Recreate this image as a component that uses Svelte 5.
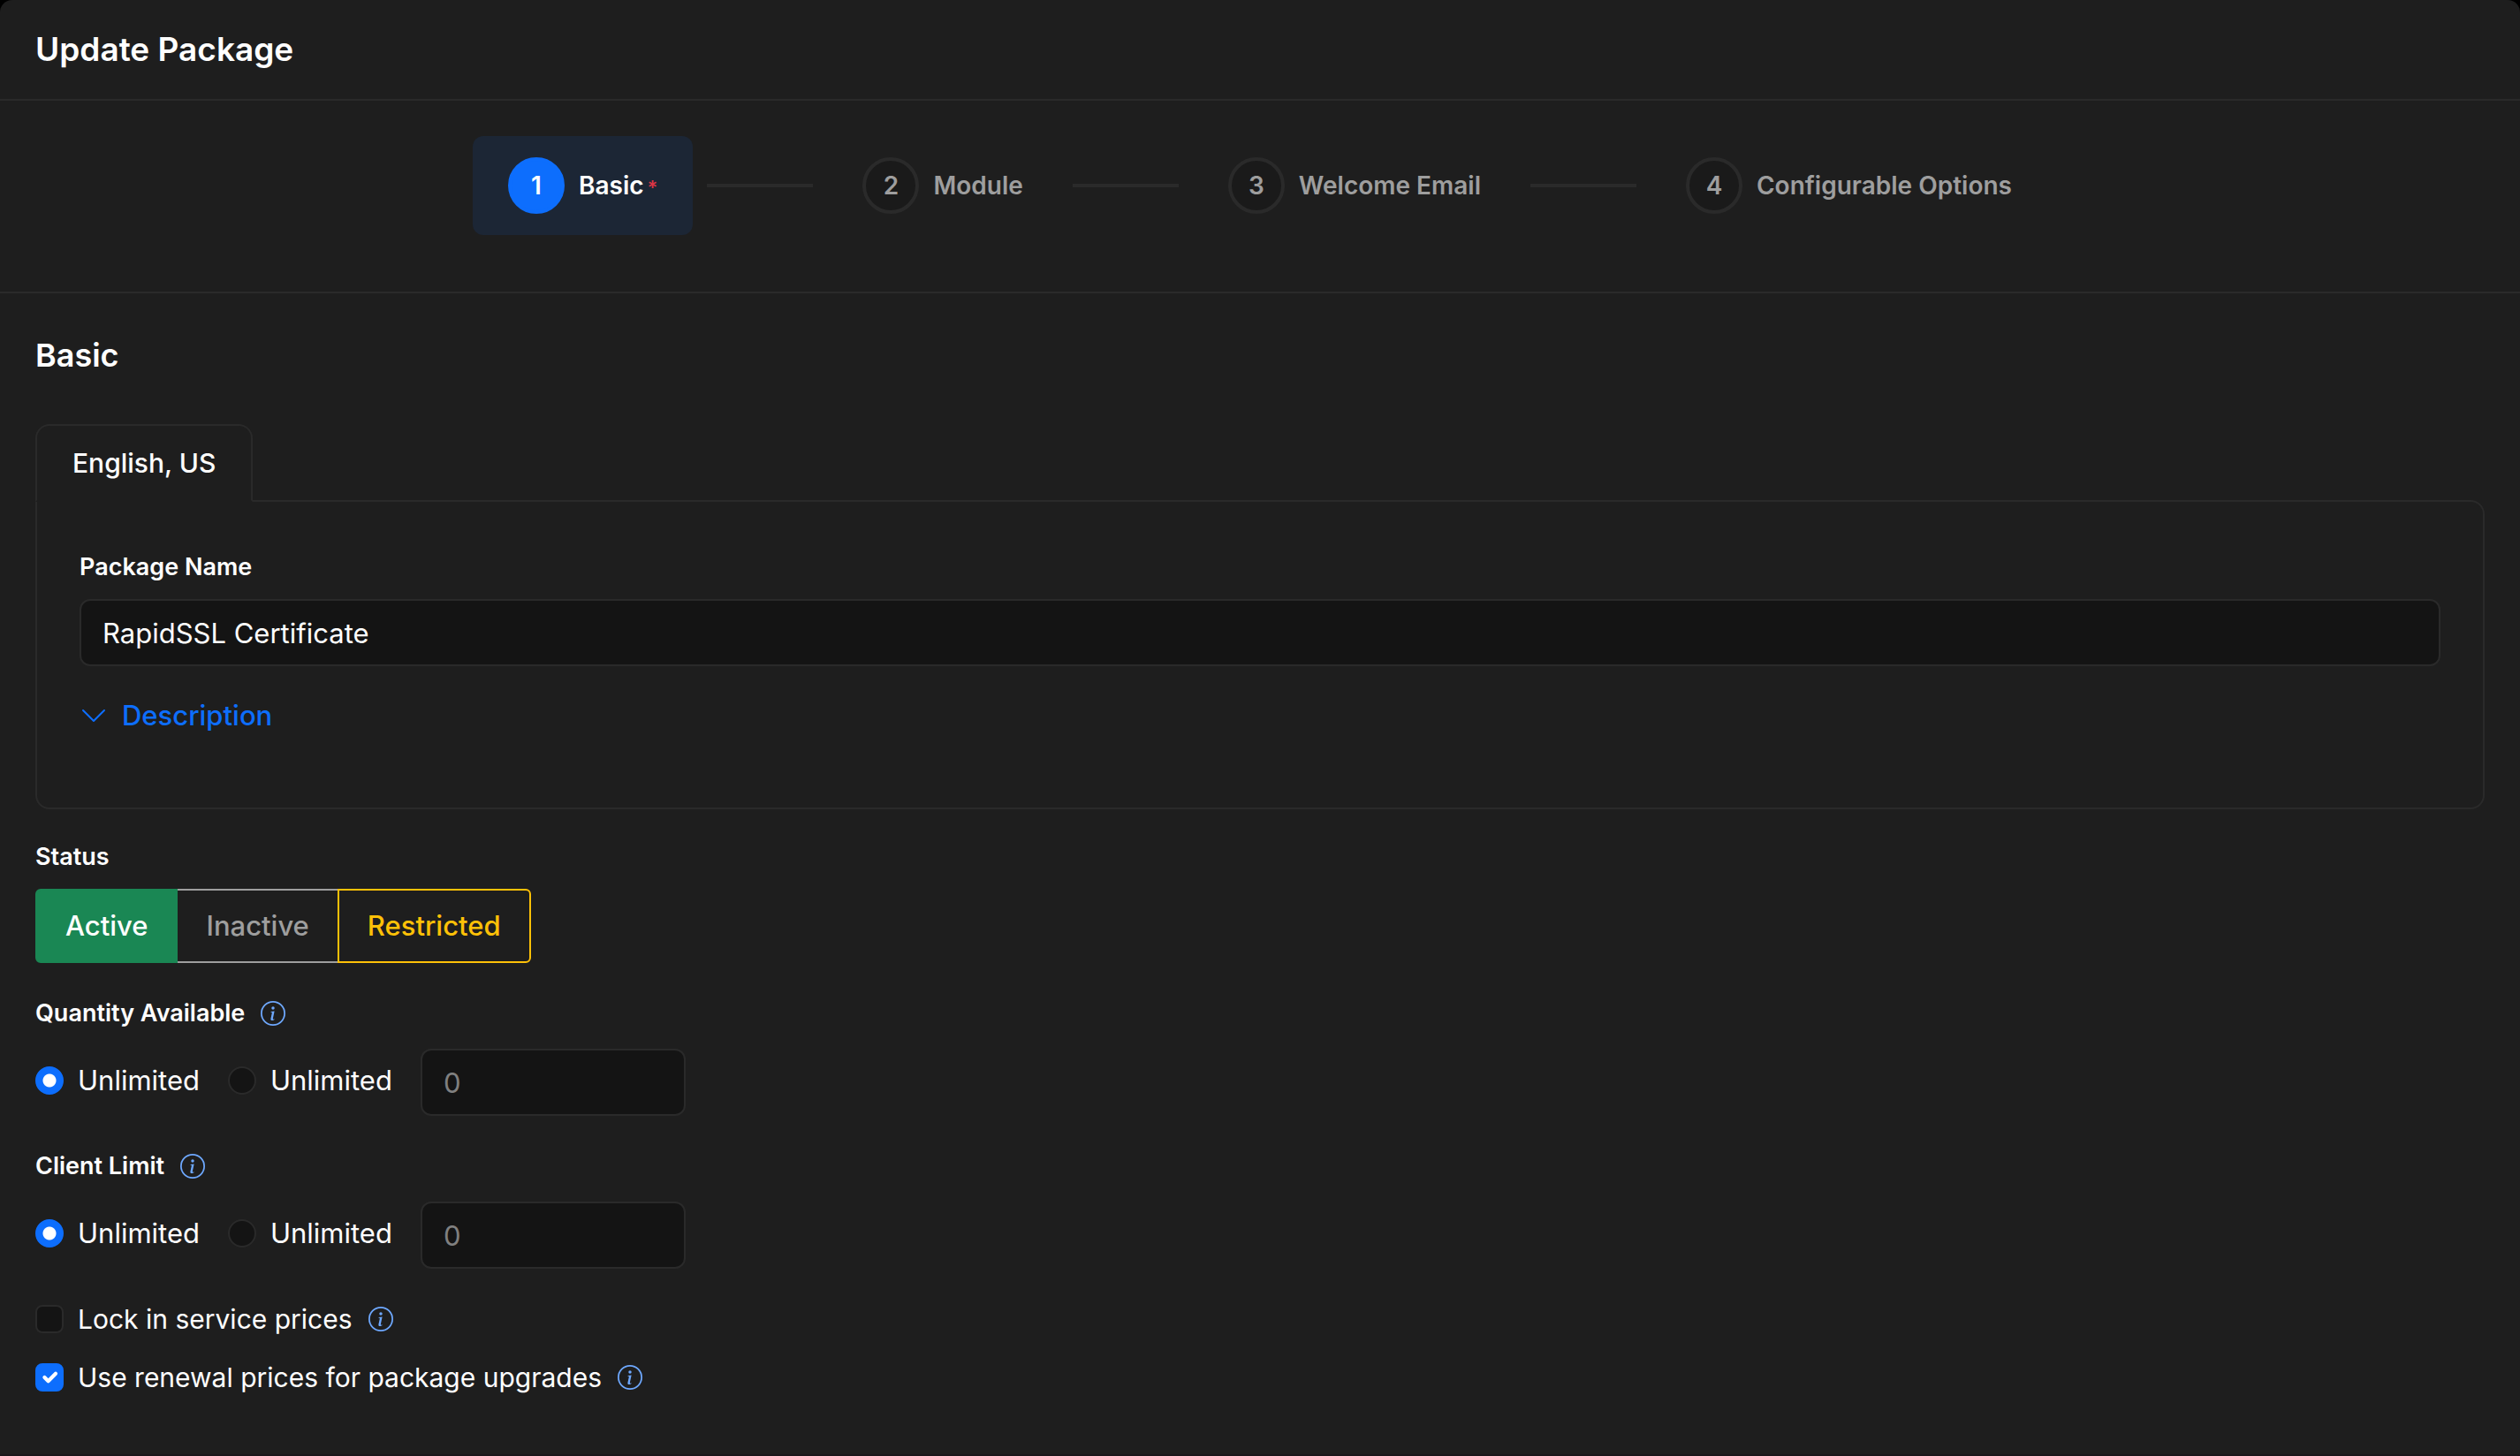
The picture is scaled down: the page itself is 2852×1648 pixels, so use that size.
<script>
  const steps = [
    { id: 1, title: 'Basic', required: true },
    { id: 2, title: 'Module' },
    { id: 3, title: 'Welcome Email' },
    { id: 4, title: 'Configurable Options' }
  ];

  const statuses = [
    { value: 'active', label: 'Active' },
    { value: 'inactive', label: 'Inactive' },
    { value: 'restricted', label: 'Restricted' }
  ];

  let currentStep = $state(1);
  let packageName = $state('RapidSSL Certificate');
  let showDescription = $state(false);
  let status = $state('active');
  let lockPrices = $state(false);
  let useRenewal = $state(true);

  let limits = $state([
    { key: 'quantity', label: 'Quantity Available', mode: 'unlimited', amount: null },
    { key: 'client', label: 'Client Limit', mode: 'unlimited', amount: null }
  ]);
</script>

{#snippet info(label)}
  <button type="button" class="info" aria-label="About {label}">
    <svg viewBox="0 0 16 16" fill="currentColor" aria-hidden="true">
      <path d="M8 15A7 7 0 1 1 8 1a7 7 0 0 1 0 14m0 1A8 8 0 1 0 8 0a8 8 0 0 0 0 16" />
      <path d="m8.93 6.588-2.29.287-.082.38.45.083c.294.07.352.176.288.469l-.738 3.468c-.194.897.105 1.319.808 1.319.545 0 1.178-.252 1.465-.598l.088-.416c-.2.176-.492.246-.686.246-.275 0-.375-.193-.304-.533zM9 4.5a1 1 0 1 1-2 0 1 1 0 0 1 2 0" />
    </svg>
  </button>
{/snippet}

<main class="modal">
  <header class="modal-header">
    <h1>Update Package</h1>
  </header>

  <nav class="stepper" aria-label="Steps">
    {#each steps as step, i}
      {#if i > 0}
        <span class="step-line"></span>
      {/if}
      <button type="button" class="step" class:current={currentStep === step.id} onclick={() => (currentStep = step.id)}>
        <span class="step-number">{step.id}</span>
        <span class="step-title">{step.title}{#if step.required}<span class="required">*</span>{/if}</span>
      </button>
    {/each}
  </nav>

  <form class="modal-body">
    <h2>Basic</h2>

    <div class="tabs" role="tablist">
      <button type="button" class="tab" role="tab" aria-selected="true">English, US</button>
    </div>
    <section class="tab-panel">
      <label class="field-label" for="package-name">Package Name</label>
      <input class="form-control" id="package-name" type="text" bind:value={packageName} />

      <button type="button" class="description" aria-expanded={showDescription} onclick={() => (showDescription = !showDescription)}>
        <svg viewBox="0 0 16 16" fill="currentColor" aria-hidden="true">
          <path fill-rule="evenodd" d="M1.646 4.646a.5.5 0 0 1 .708 0L8 10.293l5.646-5.647a.5.5 0 0 1 .708.708l-6 6a.5.5 0 0 1-.708 0l-6-6a.5.5 0 0 1 0-.708" />
        </svg>
        Description
      </button>
    </section>

    <fieldset class="status">
      <legend class="field-label">Status</legend>
      <div class="btn-group">
        {#each statuses as item}
          <button type="button" class="btn {item.value}" class:selected={status === item.value} onclick={() => (status = item.value)}>
            {item.label}
          </button>
        {/each}
      </div>
    </fieldset>

    {#each limits as limit}
      <div class="limit" role="group" aria-labelledby="{limit.key}-label">
        <div class="limit-label">
          <span class="field-label" id="{limit.key}-label">{limit.label}</span>
          {@render info(limit.label)}
        </div>
        <div class="limit-row">
          <label class="check">
            <input type="radio" name={limit.key} value="unlimited" bind:group={limit.mode} />
            Unlimited
          </label>
          <label class="check">
            <input type="radio" name={limit.key} value="limited" bind:group={limit.mode} />
            Unlimited
          </label>
          <input class="form-control amount" type="number" placeholder="0" aria-labelledby="{limit.key}-label" bind:value={limit.amount} />
        </div>
      </div>
    {/each}

    <div class="options">
      <div class="option">
        <label class="check">
          <input type="checkbox" bind:checked={lockPrices} />
          Lock in service prices
        </label>
        {@render info('Lock in service prices')}
      </div>
      <div class="option">
        <label class="check">
          <input type="checkbox" bind:checked={useRenewal} />
          Use renewal prices for package upgrades
        </label>
        {@render info('Use renewal prices')}
      </div>
    </div>
  </form>
</main>

<style>
  :global(body) {
    background: #000;
  }

  .modal {
    --bg: #1e1e1e;
    --line: #2a2a2a;
    --field: #141414;
    --muted: #9e9e9e;
    --blue: #0d6efd;
    --green: #1a8754;
    box-sizing: border-box;
    min-height: 100vh;
    background: var(--bg);
    border-bottom: 2px solid #1a161a;
    border-radius: 14px 14px 0 0;
    color: #fff;
    font-family: Inter, 'Liberation Sans', sans-serif;
    font-size: 31px;
    line-height: 48px;
  }

  button,
  input {
    font: inherit;
    color: inherit;
    margin: 0;
  }

  button {
    background: none;
    border: 0;
    padding: 0;
    cursor: pointer;
  }

  .modal-header {
    padding: 32px 40px;
    border-bottom: 2px solid var(--line);
  }

  h1,
  h2 {
    margin: 0;
    font-size: 37px;
    font-weight: 600;
    line-height: 48px;
  }

  h2 {
    font-size: 36px;
  }

  .stepper {
    display: flex;
    align-items: center;
    justify-content: center;
    gap: 16px;
    padding: 40px 40px 64px;
    border-bottom: 2px solid var(--line);
  }

  .step {
    display: flex;
    align-items: center;
    gap: 16px;
    padding: 24px 40px;
    border-radius: 12px;
    color: var(--muted);
    font-size: 28px;
    font-weight: 600;
  }

  .step.current {
    background: #1c2635;
    color: #fff;
  }

  .step-number {
    box-sizing: border-box;
    width: 64px;
    height: 64px;
    border: 4px solid var(--line);
    border-radius: 50%;
    background: #1a1a1a;
    line-height: 56px;
    text-align: center;
  }

  .current .step-number {
    background: var(--blue);
    border-color: var(--blue);
  }

  .required {
    margin-left: 4px;
    color: #dc3545;
    font-size: 22px;
    line-height: 0;
  }

  .step-line {
    width: 120px;
    height: 4px;
    background: var(--line);
  }

  .modal-body {
    padding: 46px 40px 48px;
  }

  .tabs {
    display: flex;
    margin-top: 54px;
  }

  /* sits on the panel's top border so the two read as one outline */
  .tab {
    z-index: 1;
    margin-bottom: -2px;
    padding: 20px 40px;
    border: 2px solid var(--line);
    border-bottom-color: var(--bg);
    border-radius: 16px 16px 0 0;
    background: var(--bg);
    font-size: 30px;
    font-weight: 500;
    line-height: 44px;
  }

  .tab-panel {
    padding: 48px;
    border: 2px solid var(--line);
    border-radius: 0 16px 16px 16px;
  }

  .field-label {
    display: block;
    padding: 0;
    font-size: 27px;
    font-weight: 600;
    line-height: 52px;
  }

  .form-control {
    box-sizing: border-box;
    width: 100%;
    height: 76px;
    padding: 0 24px;
    border: 2px solid var(--line);
    border-radius: 12px;
    background: var(--field);
  }

  .tab-panel .form-control {
    display: block;
    margin-top: 10px;
  }

  .form-control::placeholder {
    color: #808080;
    opacity: 1;
  }

  .description {
    display: flex;
    align-items: center;
    gap: 16px;
    margin: 32px 0;
    color: var(--blue);
    font-weight: 500;
  }

  .description svg {
    width: 32px;
    height: 32px;
  }

  .status {
    margin: 28px 0 0;
    padding: 0;
    border: 0;
  }

  .btn-group {
    display: flex;
    margin-top: 10px;
  }

  .btn {
    padding: 16px 32px;
    border: 2px solid currentColor;
    font-weight: 500;
  }

  .btn + .btn {
    margin-left: -2px;
  }

  .btn:first-child {
    border-radius: 6px 0 0 6px;
  }

  .btn:last-child {
    border-radius: 0 6px 6px 0;
  }

  .active {
    color: var(--green);
  }

  .inactive {
    color: var(--muted);
  }

  .restricted {
    color: #ffc107;
  }

  .active.selected {
    z-index: 1;
    background: var(--green);
    border-color: var(--green);
    color: #fff;
  }

  .limit {
    margin-top: 31px;
  }

  .limit-label,
  .option,
  .check {
    display: flex;
    align-items: center;
  }

  .limit-label,
  .option {
    gap: 18px;
  }

  .limit-row {
    display: flex;
    align-items: flex-start;
    gap: 32px;
    margin-top: 14px;
  }

  .limit-row .check {
    height: 72px;
  }

  .check {
    gap: 16px;
  }

  .check input {
    appearance: none;
    box-sizing: border-box;
    width: 32px;
    height: 32px;
    border: 2px solid var(--line);
    border-radius: 8px;
    background: var(--field) center / 100% no-repeat;
  }

  .check input[type='radio'] {
    border-radius: 50%;
  }

  .check input:checked {
    border-color: var(--blue);
    background-color: var(--blue);
  }

  .check input[type='radio']:checked {
    background-image: radial-gradient(circle, #fff 7px, transparent 8px);
  }

  .check input[type='checkbox']:checked {
    background-image: url("data:image/svg+xml,%3csvg xmlns='http://www.w3.org/2000/svg' viewBox='0 0 20 20'%3e%3cpath fill='none' stroke='%23fff' stroke-linecap='round' stroke-linejoin='round' stroke-width='3' d='m6 10 3 3 6-6'/%3e%3c/svg%3e");
  }

  .amount {
    width: 300px;
    appearance: textfield;
  }

  .info {
    display: flex;
    color: #6ea8fe;
  }

  .info svg {
    width: 28px;
    height: 28px;
  }

  .options {
    display: grid;
    gap: 18px;
    margin-top: 33px;
    font-size: 30px;
  }
</style>
